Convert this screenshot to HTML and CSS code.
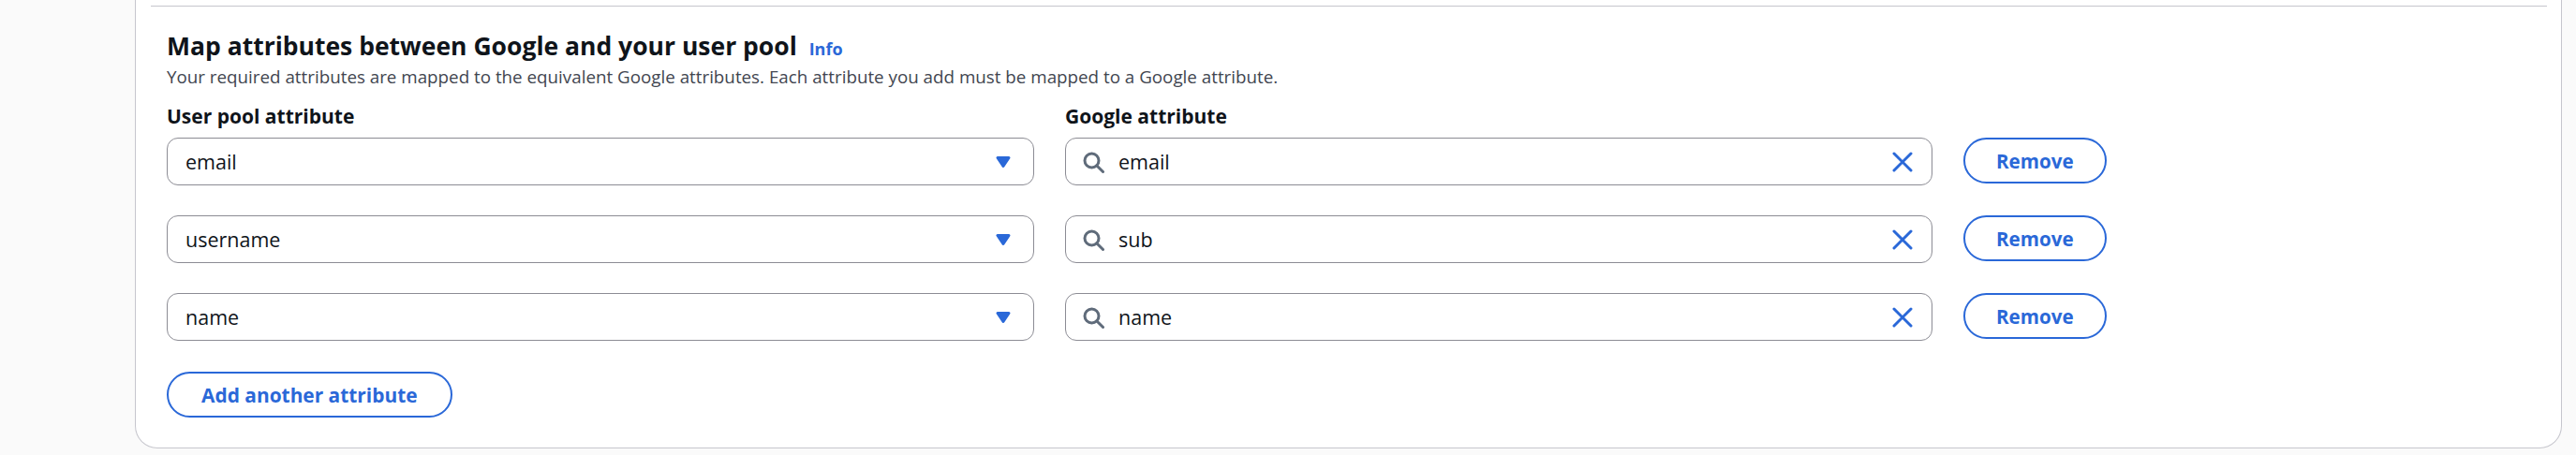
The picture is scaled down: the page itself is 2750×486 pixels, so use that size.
FILE: index.html
```html
<!DOCTYPE html>
<html lang="en">
<head>
<meta charset="utf-8">
<title>Map attributes</title>
<link rel="stylesheet" href="styles.css">
</head>
<body>
<div class="page">
  <div class="card">
    <div class="divider"></div>
    <section class="section">
      <h2 class="title">Map attributes between Google and your user pool <a class="info" href="#">Info</a></h2>
      <p class="desc">Your required attributes are mapped to the equivalent Google attributes. Each attribute you add must be mapped to a Google attribute.</p>

      <div class="grid">
        <div class="label">User pool attribute</div>
        <div class="label">Google attribute</div>
        <div></div>

        <div class="select"><span class="value">email</span>
          <svg class="caret" viewBox="0 0 16 16"><path d="M4 5h8l-4 6-4-6z"/></svg></div>
        <div class="search">
          <svg class="mag" viewBox="0 0 16 16"><circle cx="7" cy="7" r="5"/><path d="m15 15-4.5-4.5"/></svg>
          <span class="value">email</span>
          <svg class="clear" viewBox="0 0 16 16"><path d="m2 2 12 12M14 2 2 14"/></svg></div>
        <button class="btn">Remove</button>

        <div class="select"><span class="value">username</span>
          <svg class="caret" viewBox="0 0 16 16"><path d="M4 5h8l-4 6-4-6z"/></svg></div>
        <div class="search">
          <svg class="mag" viewBox="0 0 16 16"><circle cx="7" cy="7" r="5"/><path d="m15 15-4.5-4.5"/></svg>
          <span class="value">sub</span>
          <svg class="clear" viewBox="0 0 16 16"><path d="m2 2 12 12M14 2 2 14"/></svg></div>
        <button class="btn">Remove</button>

        <div class="select"><span class="value">name</span>
          <svg class="caret" viewBox="0 0 16 16"><path d="M4 5h8l-4 6-4-6z"/></svg></div>
        <div class="search">
          <svg class="mag" viewBox="0 0 16 16"><circle cx="7" cy="7" r="5"/><path d="m15 15-4.5-4.5"/></svg>
          <span class="value">name</span>
          <svg class="clear" viewBox="0 0 16 16"><path d="m2 2 12 12M14 2 2 14"/></svg></div>
        <button class="btn">Remove</button>
      </div>

      <button class="btn add">Add another attribute</button>
    </section>
  </div>
</div>
</body>
</html>
```
FILE: styles.css
```css
* { box-sizing: border-box; }

html, body {
  margin: 0;
  background: #fafafa;
  font-family: "Open Sans", "Noto Sans", sans-serif;
  color: #0f141a;
}

.page {
  padding: 0 15px 0 144px;
  height: 486px;
}

.card {
  background: #fff;
  border: 1px solid #c6c6cd;
  border-top: none;
  border-radius: 0 0 24px 24px;
  padding: 6px 15px 32px 16px;
}

.divider {
  height: 1px;
  background: #c6c6cd;
}

.section {
  padding: 24px 0 0 17px;
}

.title {
  margin: 0;
  font-size: 26.5px;
  line-height: 36px;
  font-weight: 700;
}

.info {
  margin-left: 6px;
  font-size: 18px;
  line-height: 20px;
  font-weight: 700;
  color: #2a68d8;
  text-decoration: none;
}

.desc {
  margin: 2px 0 0;
  font-size: 18.8px;
  line-height: 27px;
  color: #424650;
}

.grid {
  margin-top: 13px;
  display: grid;
  grid-template-columns: 926px 926px auto;
  column-gap: 33px;
  row-gap: 32px;
  justify-content: start;
  align-items: start;
}

.label {
  font-size: 21px;
  line-height: 30px;
  font-weight: 700;
  margin-bottom: -24px;
}

.select, .search {
  height: 51px;
  border: 1px solid #8c8c94;
  border-radius: 12px;
  background: #fff;
  display: flex;
  align-items: center;
  font-size: 21.5px;
}

.select {
  padding: 0 20px 0 19px;
}

.search {
  padding: 0 19px 0 17px;
}

.value {
  flex: 1;
  line-height: 30px;
}

.caret {
  width: 24px;
  height: 24px;
  fill: #2a68d8;
  stroke: #2a68d8;
  stroke-width: 2;
  stroke-linejoin: round;
}

.mag {
  width: 24px;
  height: 24px;
  margin-right: 15px;
  fill: none;
  stroke: #5f6b7a;
  stroke-width: 2;
  stroke-linecap: round;
}

.clear {
  width: 24px;
  height: 24px;
  fill: none;
  stroke: #2a68d8;
  stroke-width: 2;
  stroke-linecap: round;
}

.btn {
  height: 49px;
  padding: 0 33px;
  border: 2px solid #2a68d8;
  border-radius: 25px;
  background: #fff;
  color: #2a68d8;
  font-family: "Open Sans", "Noto Sans", sans-serif;
  font-size: 20.6px;
  font-weight: 700;
  line-height: 28px;
  cursor: pointer;
}

.add {
  margin-top: 33px;
  padding: 0 35px;
  font-size: 20.9px;
  display: block;
}
```
